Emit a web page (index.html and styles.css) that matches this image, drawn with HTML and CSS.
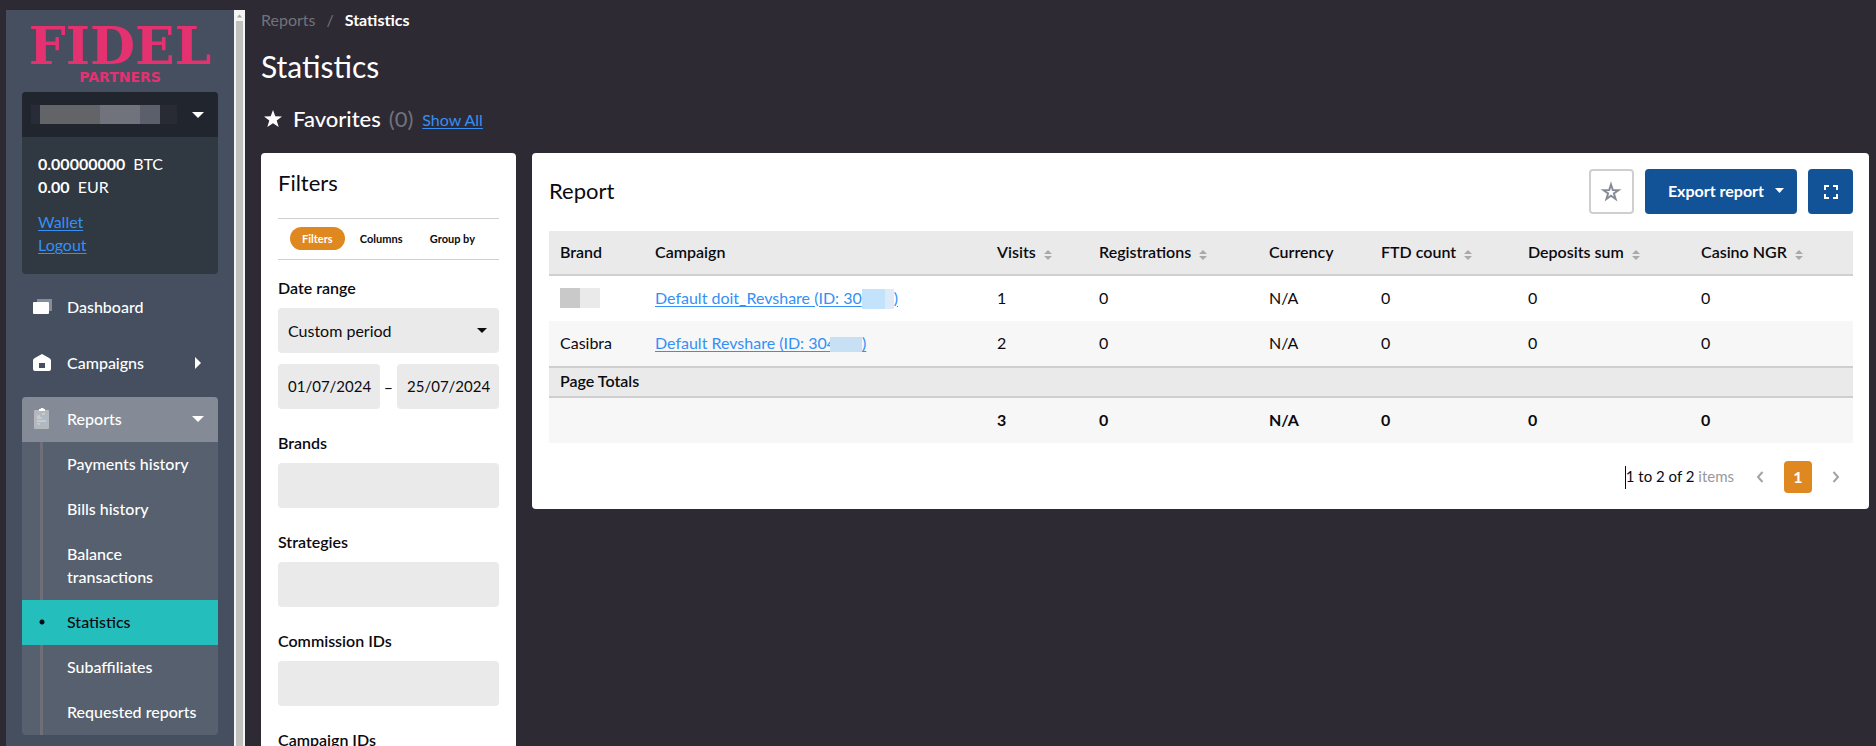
FILE: index.html
```html
<!DOCTYPE html>
<html lang="en">
<head>
<meta charset="utf-8">
<meta name="viewport" content="width=device-width, initial-scale=1">
<title>Statistics</title>
<link rel="stylesheet" href="styles.css">
</head>
<body>
<div class="app">
  <aside class="sidebar">
    <div class="sidebar-content">
      <div class="logo">
        <span class="logo-name">FIDEL</span>
        <span class="logo-sub">PARTNERS</span>
      </div>
      <section class="account">
        <button class="account-head" type="button" aria-label="Account">
          <span class="account-mask"><i class="m1"></i><i class="m2"></i><i class="m3"></i><i class="m4"></i><i class="m5"></i></span>
          <svg class="caret" width="12" height="6" viewBox="0 0 12 6"><path d="M0 0h12L6 6z" fill="#fff"/></svg>
        </button>
        <div class="account-body">
          <div class="balances">
            <div><b>0.00000000</b>BTC</div>
            <div><b>0.00</b>EUR</div>
          </div>
          <a href="#wallet">Wallet</a>
          <a href="#logout">Logout</a>
        </div>
      </section>
      <nav class="menu">
        <a class="menu-item" href="#dashboard">
          <svg class="menu-icon" width="20" height="22" viewBox="0 0 20 22"><path d="M5 3h15v12H5z" fill="#868d98"/><rect x="1" y="6" width="16" height="12" rx="1" fill="#fff"/></svg>
          <span>Dashboard</span>
        </a>
        <button class="menu-item" type="button">
          <svg class="menu-icon" width="20" height="22" viewBox="0 0 20 22"><path fill-rule="evenodd" d="M10 2l7.6 4.2q1.4.8 1.4 2.300V17q0 2-2 2H3q-2 0-2-2V8.500q0-1.500 1.400-2.300zM7 11v5h6v-5z" fill="#fff"/></svg>
          <span>Campaigns</span>
          <svg class="caret caret-right" width="6" height="12" viewBox="0 0 6 12"><path d="M0 0v12L6 6z" fill="#fff"/></svg>
        </button>
        <div class="menu-group">
          <button class="menu-item menu-open" type="button">
            <svg class="menu-icon" width="20" height="22" viewBox="0 0 20 22"><rect x="2" y="2" width="15" height="19" rx="1" fill="#b4b7bb"/><path d="M7 1h1.500l1-1.500h1L12 1h1v2H7z" fill="#fff"/><path d="M5 8h3M10 6h3M5 10h5M5 13h9M5 16h3" stroke="#dcdee0"/><path d="M5 7h2M8 8h2M12 8h2M14 11h1M4 17h2M8 17h2M12 17h2" stroke="#8cc4e8"/></svg>
            <span>Reports</span>
            <svg class="caret" width="12" height="6" viewBox="0 0 12 6"><path d="M0 0h12L6 6z" fill="#fff"/></svg>
          </button>
          <div class="submenu">
            <a href="#payments">Payments history</a>
            <a href="#bills">Bills history</a>
            <a href="#balance">Balance transactions</a>
            <a class="active" href="#statistics">Statistics</a>
            <a href="#subaffiliates">Subaffiliates</a>
            <a href="#requested">Requested reports</a>
          </div>
        </div>
      </nav>
    </div>
    <div class="scrollbar">
      <svg width="11" height="11" viewBox="0 0 11 11"><path d="M3 7.500L5.500 4.500 8 7.500z" fill="#a3a3a3"/></svg>
      <div class="thumb"></div>
    </div>
  </aside>

  <main class="main">
    <nav class="breadcrumb"><a href="#reports">Reports</a><span>/</span><b>Statistics</b></nav>
    <h1>Statistics</h1>
    <div class="favorites">
      <svg width="20" height="20" viewBox="0 0 20 20"><path d="M10 1l2.300 6.200 6.700.200-5.300 4.100L15.700 18 10 14.300 4.300 18l2-6.500L1 7.400l6.700-.2z" fill="#fff"/></svg>
      <h2>Favorites</h2><span class="count">(0)</span><a href="#favorites">Show All</a>
    </div>

    <div class="columns">
      <section class="panel filters">
        <h2>Filters</h2>
        <div class="tabs">
          <button class="tab selected" type="button">Filters</button>
          <button class="tab" type="button">Columns</button>
          <button class="tab" type="button">Group by</button>
        </div>
        <div class="field">
          <label for="period">Date range</label>
          <div class="select-wrap">
            <select id="period"><option>Custom period</option></select>
          </div>
          <div class="dates">
            <input type="text" value="01/07/2024" aria-label="From">
            <span>–</span>
            <input type="text" value="25/07/2024" aria-label="To">
          </div>
        </div>
        <div class="field"><label for="brands">Brands</label><input id="brands" type="text"></div>
        <div class="field"><label for="strategies">Strategies</label><input id="strategies" type="text"></div>
        <div class="field"><label for="commissions">Commission IDs</label><input id="commissions" type="text"></div>
        <div class="field"><label for="campaigns">Campaign IDs</label><input id="campaigns" type="text"></div>
      </section>

      <section class="panel report">
        <header class="report-head">
          <h2>Report</h2>
          <button class="btn-star" type="button" aria-label="Add to favorites">
            <svg width="22" height="22" viewBox="0 0 22 22"><path d="M11 3.500l1.800 5.500 5.700.1-4.600 3.400 1.700 5.500-4.600-3.300L6.400 18l1.700-5.500L3.500 9.100 9.200 9z" fill="none" stroke="#868d98" stroke-width="2"/></svg>
          </button>
          <button class="btn-export" type="button">Export report
            <svg width="9" height="5" viewBox="0 0 9 5"><path d="M0 0h9L4.500 5z" fill="#fff"/></svg>
          </button>
          <button class="btn-full" type="button" aria-label="Full screen">
            <svg width="14" height="14" viewBox="0 0 14 14"><path d="M1 5V1h4M9 1h4v4M13 9v4H9M5 13H1V9" fill="none" stroke="#fff" stroke-width="2"/></svg>
          </button>
        </header>
        <table class="grid">
          <colgroup><col class="c-brand"><col class="c-campaign"><col class="c-visits"><col class="c-reg"><col class="c-cur"><col class="c-ftd"><col class="c-dep"><col class="c-ngr"></colgroup>
          <thead>
            <tr>
              <th>Brand</th>
              <th>Campaign</th>
              <th>Visits<svg class="sort" viewBox="0 0 8 10"><path d="M0 4l4-4 4 4zM0 6h8l-4 4z"/></svg></th>
              <th>Registrations<svg class="sort" viewBox="0 0 8 10"><path d="M0 4l4-4 4 4zM0 6h8l-4 4z"/></svg></th>
              <th>Currency</th>
              <th>FTD count<svg class="sort" viewBox="0 0 8 10"><path d="M0 4l4-4 4 4zM0 6h8l-4 4z"/></svg></th>
              <th>Deposits sum<svg class="sort" viewBox="0 0 8 10"><path d="M0 4l4-4 4 4zM0 6h8l-4 4z"/></svg></th>
              <th>Casino NGR<svg class="sort" viewBox="0 0 8 10"><path d="M0 4l4-4 4 4zM0 6h8l-4 4z"/></svg></th>
            </tr>
          </thead>
          <tbody>
            <tr><td><span class="brand-mask"></span></td><td><a href="#c1">Default doit_Revshare (ID: 30<span class="id-mask"></span>)</a></td><td>1</td><td>0</td><td>N/A</td><td>0</td><td>0</td><td>0</td></tr>
            <tr class="alt"><td>Casibra</td><td><a href="#c2">Default Revshare (ID: 304<span class="id-mask id-mask-low"></span>)</a></td><td>2</td><td>0</td><td>N/A</td><td>0</td><td>0</td><td>0</td></tr>
          </tbody>
          <tfoot>
            <tr class="totals-title"><th colspan="8">Page Totals</th></tr>
            <tr class="totals"><td></td><td></td><td>3</td><td>0</td><td>N/A</td><td>0</td><td>0</td><td>0</td></tr>
          </tfoot>
        </table>
        <div class="pager">
          <p><span class="text-cursor"></span>1 to 2 of 2 <span class="muted">items</span></p>
          <button type="button" aria-label="Previous"><svg width="8" height="12" viewBox="0 0 8 12"><path d="M6.500 1L2 6l4.500 5" fill="none" stroke="#a3a3a3" stroke-width="2"/></svg></button>
          <button class="current" type="button">1</button>
          <button type="button" aria-label="Next"><svg width="8" height="12" viewBox="0 0 8 12"><path d="M1.500 1L6 6l-4.500 5" fill="none" stroke="#a3a3a3" stroke-width="2"/></svg></button>
        </div>
      </section>
    </div>
  </main>
</div>
</body>
</html>
```
FILE: styles.css
```css
* { box-sizing: border-box; }

body {
  margin: 0;
  background: #2d2a34;
  color: #0b0a10;
  font: 16px/23px Lato, "Open Sans", sans-serif;
}

button, input, select { font: inherit; color: inherit; }
button { border: 0; padding: 0; background: none; cursor: pointer; }
h1, h2, p { margin: 0; font-weight: 400; }
h2 { font-size: 22px; line-height: 28px; }
a { color: #3390f6; text-underline-offset: 2px; }
svg { flex: none; }

.app { display: flex; height: 100vh; overflow: hidden; }

/* Sidebar */
.sidebar {
  display: flex;
  flex: none;
  width: 239px;
  margin: 10px 0 0 6px;
  background: #454f60;
  color: #fff;
}
.sidebar-content { flex: 1; padding: 14px 16px 0; }
.scrollbar { display: flex; flex-direction: column; align-items: center; width: 11px; background: #f4f4f5; }
.thumb { flex: 1; width: 7px; background: #c0c0bf; }

.logo {
  display: flex;
  flex-direction: column;
  align-items: center;
  height: 68px;
  color: #e4316f;
  font-weight: 700;
  white-space: nowrap;
}
.logo-name { font-family: "DejaVu Serif", serif; font-size: 52px; line-height: 44px; }
.logo-sub { font-family: "DejaVu Sans", sans-serif; font-size: 14px; line-height: 18px; }

.account { overflow: hidden; border-radius: 4px; background: #303842; }
.account-head {
  display: flex;
  align-items: center;
  justify-content: space-between;
  width: 100%;
  height: 45px;
  padding: 0 14px 0 9px;
  background: #20252e;
}
.account-mask { display: flex; height: 19px; }
.m1 { width: 9px; background: #282c38; }
.m2 { width: 60px; background: #626468; }
.m3 { width: 40px; background: #71737c; }
.m4 { width: 20px; background: #5b5f6b; }
.m5 { width: 17px; background: #282a34; }
.account-body { display: flex; flex-direction: column; align-items: flex-start; padding: 15px 16px 18px; }
.balances { margin-bottom: 12px; }
.balances b { margin-right: 8px; }

.menu { display: flex; flex-direction: column; gap: 11px; margin-top: 11px; }
.menu-item {
  display: flex;
  align-items: center;
  width: 100%;
  height: 45px;
  padding: 0 14px 2px 10px;
  color: #fff;
  font-weight: 500;
  text-decoration: none;
}
.menu-icon { margin-right: 15px; }
.menu-item .caret { margin-left: auto; }
.menu-item .caret-right { margin-right: 3px; }
.menu-group { overflow: hidden; border-radius: 4px; background: #56606e; }
.menu-open { background: #848b96; }
.submenu { background: linear-gradient(#706f77, #706f77) 18px 0 / 3px 100% no-repeat; }
.submenu a {
  display: block;
  padding: 10px 16px 12px 45px;
  color: #fff;
  font-weight: 500;
  text-decoration: none;
}
.submenu a.active { background: radial-gradient(circle at 20px 22px, #0b0a10 2px, #24bfbd 3px); color: #0b0a10; }

/* Main column */
.main { flex: 1; min-width: 0; padding: 8px 7px 0 16px; }
.breadcrumb { display: flex; gap: 11px; color: #71737c; }
.breadcrumb a { color: inherit; text-decoration: none; }
.breadcrumb b { color: #fff; }
h1 { margin-top: 17px; color: #fff; font-size: 30px; line-height: 36px; }
.favorites { display: flex; align-items: center; margin: 21px 0 20px; padding-left: 2px; color: #fff; }
.favorites h2 { margin: 0 8px 0 10px; font-weight: 500; }
.count { margin-right: 9px; color: #71737c; font-size: 22px; line-height: 28px; }

.columns { display: flex; align-items: flex-start; gap: 16px; }
.panel { border-radius: 4px; background: #fff; padding: 16px 17px; }

/* Filters */
.filters { flex: none; width: 255px; }
.tabs {
  display: flex;
  align-items: center;
  justify-content: space-between;
  height: 42px;
  margin: 21px 0 16px;
  padding: 0 12px 2px;
  border: solid #cfcfcf;
  border-width: 1px 0;
}
.tab { padding: 0 12px; border-radius: 12px; font-size: 11px; font-weight: 700; line-height: 23px; }
.tab:not(.selected) { padding: 0 12px 0 5px; }
.tab.selected { background: #df8820; color: #fff; }
.field { margin-bottom: 22px; }
.field label { display: block; margin-bottom: 9px; font-weight: 600; }
.field input, .field select {
  display: block;
  width: 100%;
  height: 45px;
  border: 0;
  border-radius: 4px;
  padding: 0 10px;
  background: #eaeaea;
}
.select-wrap { position: relative; margin-bottom: 11px; }
.select-wrap::after {
  content: "";
  position: absolute;
  right: 12px;
  top: 20px;
  border: solid transparent;
  border-width: 5px 5px 0;
  border-top-color: #0b0a10;
}
.field select { appearance: none; }
.dates { display: flex; align-items: center; justify-content: space-between; }
.field .dates input { width: 102px; padding: 0 0 2px 10px; font-size: 15px; }

/* Report */
.report { flex: 1; min-width: 0; padding-right: 16px; }
.report-head { display: flex; align-items: center; gap: 11px; margin-bottom: 17px; }
.report-head h2 { flex: 1; padding-bottom: 2px; }
.report-head button { display: flex; align-items: center; justify-content: center; height: 45px; border-radius: 4px; }
.report-head .btn-star { width: 45px; border: 2px solid #cfcfcf; }
.report-head .btn-export { gap: 11px; padding: 0 13px 2px 23px; background: #125297; color: #fff; font-weight: 700; }
.report-head .btn-full { width: 45px; background: #125297; }

.grid { width: 100%; table-layout: fixed; border-collapse: separate; border-spacing: 0; }
.c-brand { width: 95px; }
.c-campaign { width: 342px; }
.c-visits { width: 102px; }
.c-reg { width: 170px; }
.c-cur { width: 112px; }
.c-ftd { width: 147px; }
.c-dep { width: 173px; }
.c-ngr { width: 163px; }
.grid th, .grid td { height: 45px; padding: 0 0 2px 11px; text-align: left; white-space: nowrap; }
.grid th { background: #eaeaea; border-bottom: 2px solid #cfcfcf; font-weight: 600; }
.grid .alt td, .grid .totals td { background: #f7f7f7; }
.grid .totals td { font-weight: 700; }
.grid .totals-title th { height: 32px; padding-bottom: 4px; border-top: 2px solid #cfcfcf; }
.sort { width: 8px; height: 10px; margin-left: 8px; vertical-align: -2px; fill: #a9a9ac; }
.brand-mask { display: block; width: 40px; height: 20px; background: linear-gradient(90deg, #c9c9c9 50%, #eaeaea 50%); }
.id-mask {
  display: inline-block;
  width: 32px;
  height: 20px;
  background: linear-gradient(90deg, #c3e3fd 72%, #dcebf7 72%);
  vertical-align: middle;
}
.id-mask-low { height: 15px; margin-left: -6px; background: #c8e0f3; }

.pager { display: flex; align-items: center; justify-content: flex-end; margin-top: 18px; padding-right: 3px; }
.pager p { margin-right: 12px; font-size: 15px; }
.pager .muted { color: #98999d; }
.pager button { display: flex; align-items: center; justify-content: center; width: 28px; height: 32px; border-radius: 4px; }
.pager .current { margin: 0 10px; padding-bottom: 2px; background: #df8820; color: #fff; font-weight: 700; }
.text-cursor { display: inline-block; width: 1px; height: 23px; background: #0b0a10; vertical-align: middle; }
```
